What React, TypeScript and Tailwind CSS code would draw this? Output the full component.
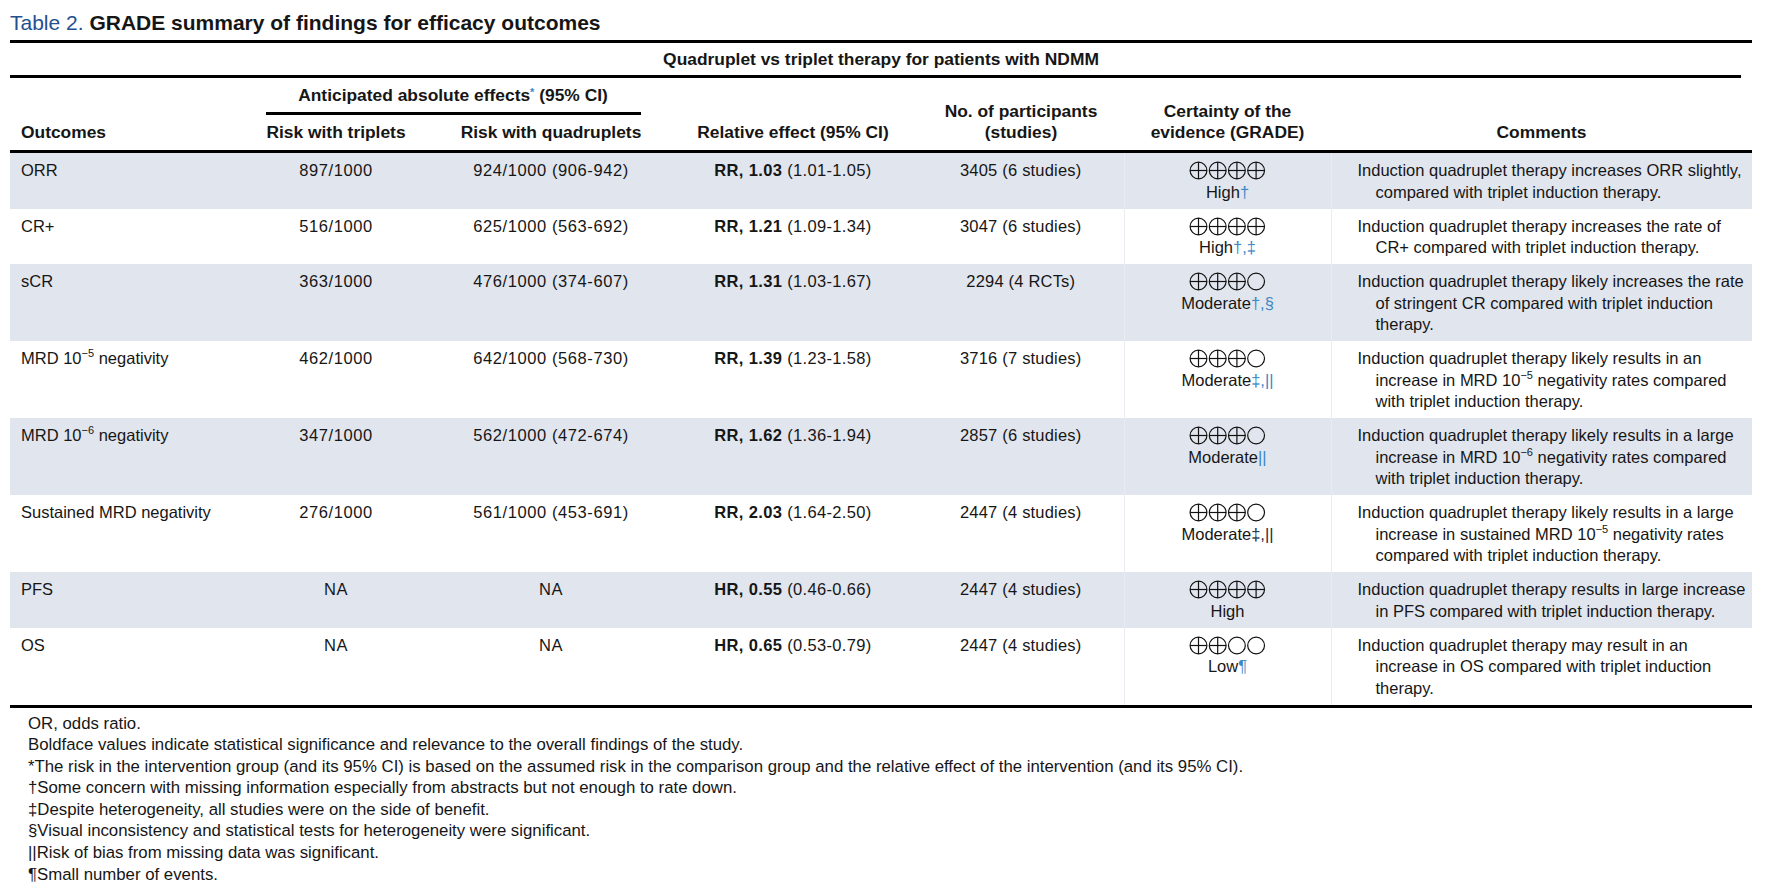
import { ReactNode } from "react";

interface IRow {
  outcome: ReactNode;
  triplets: string;
  quads: string;
  ratio: string;
  ci: string;
  participants: string;
  full: number;
  label: string;
  marks?: ReactNode;
  comment: ReactNode[];
  shaded: boolean;
}

const mark = "text-[#3b88c4]";

// minus-exponent like 10^-5
const Pow = ({ n }: { n: string }) => (
  <>
    10<sup className="text-[11px] -top-[7px]">−{n}</sup>
  </>
);

const rows: IRow[] = [
  {
    outcome: "ORR",
    triplets: "897/1000",
    quads: "924/1000 (906-942)",
    ratio: "RR, 1.03",
    ci: "(1.01-1.05)",
    participants: "3405 (6 studies)",
    full: 4,
    label: "High",
    marks: <span className={mark}>†</span>,
    comment: [
      "Induction quadruplet therapy increases ORR slightly,",
      "compared with triplet induction therapy.",
    ],
    shaded: true,
  },
  {
    outcome: "CR+",
    triplets: "516/1000",
    quads: "625/1000 (563-692)",
    ratio: "RR, 1.21",
    ci: "(1.09-1.34)",
    participants: "3047 (6 studies)",
    full: 4,
    label: "High",
    marks: <span className={mark}>†,‡</span>,
    comment: [
      "Induction quadruplet therapy increases the rate of",
      "CR+ compared with triplet induction therapy.",
    ],
    shaded: false,
  },
  {
    outcome: "sCR",
    triplets: "363/1000",
    quads: "476/1000 (374-607)",
    ratio: "RR, 1.31",
    ci: "(1.03-1.67)",
    participants: "2294 (4 RCTs)",
    full: 3,
    label: "Moderate",
    marks: <span className={mark}>†,§</span>,
    comment: [
      "Induction quadruplet therapy likely increases the rate",
      "of stringent CR compared with triplet induction",
      "therapy.",
    ],
    shaded: true,
  },
  {
    outcome: (
      <>
        MRD <Pow n="5" /> negativity
      </>
    ),
    triplets: "462/1000",
    quads: "642/1000 (568-730)",
    ratio: "RR, 1.39",
    ci: "(1.23-1.58)",
    participants: "3716 (7 studies)",
    full: 3,
    label: "Moderate",
    marks: <span className={mark}>‡,||</span>,
    comment: [
      "Induction quadruplet therapy likely results in an",
      <>
        increase in MRD <Pow n="5" /> negativity rates compared
      </>,
      "with triplet induction therapy.",
    ],
    shaded: false,
  },
  {
    outcome: (
      <>
        MRD <Pow n="6" /> negativity
      </>
    ),
    triplets: "347/1000",
    quads: "562/1000 (472-674)",
    ratio: "RR, 1.62",
    ci: "(1.36-1.94)",
    participants: "2857 (6 studies)",
    full: 3,
    label: "Moderate",
    marks: <span className={mark}>||</span>,
    comment: [
      "Induction quadruplet therapy likely results in a large",
      <>
        increase in MRD <Pow n="6" /> negativity rates compared
      </>,
      "with triplet induction therapy.",
    ],
    shaded: true,
  },
  {
    outcome: "Sustained MRD negativity",
    triplets: "276/1000",
    quads: "561/1000 (453-691)",
    ratio: "RR, 2.03",
    ci: "(1.64-2.50)",
    participants: "2447 (4 studies)",
    full: 3,
    label: "Moderate",
    marks: <span className="text-[#1d2b44]">‡,||</span>,
    comment: [
      "Induction quadruplet therapy likely results in a large",
      <>
        increase in sustained MRD <Pow n="5" /> negativity rates
      </>,
      "compared with triplet induction therapy.",
    ],
    shaded: false,
  },
  {
    outcome: "PFS",
    triplets: "NA",
    quads: "NA",
    ratio: "HR, 0.55",
    ci: "(0.46-0.66)",
    participants: "2447 (4 studies)",
    full: 4,
    label: "High",
    comment: [
      "Induction quadruplet therapy results in large increase",
      "in PFS compared with triplet induction therapy.",
    ],
    shaded: true,
  },
  {
    outcome: "OS",
    triplets: "NA",
    quads: "NA",
    ratio: "HR, 0.65",
    ci: "(0.53-0.79)",
    participants: "2447 (4 studies)",
    full: 2,
    label: "Low",
    marks: <span className={mark}>¶</span>,
    comment: [
      "Induction quadruplet therapy may result in an",
      "increase in OS compared with triplet induction",
      "therapy.",
    ],
    shaded: false,
  },
];

// GRADE certainty circles (filled = crossed circle)
const Certainty = ({ full }: { full: number }) => (
  <svg width="78" height="19" viewBox="0 0 78 19" className="block">
    {[0, 1, 2, 3].map((i) => {
      const cx = 9.5 + 19.2 * i;
      return (
        <g key={i} stroke="#111" strokeWidth="1.2" fill="none">
          <circle cx={cx} cy="9.5" r="8.4" />
          {i < full && (
            <>
              <line x1={cx - 8.4} y1="9.5" x2={cx + 8.4} y2="9.5" />
              <line x1={cx} y1="1.1" x2={cx} y2="17.9" />
            </>
          )}
        </g>
      );
    })}
  </svg>
);

const footnotes: ReactNode[] = [
  "OR, odds ratio.",
  "Boldface values indicate statistical significance and relevance to the overall findings of the study.",
  "*The risk in the intervention group (and its 95% CI) is based on the assumed risk in the comparison group and the relative effect of the intervention (and its 95% CI).",
  "†Some concern with missing information especially from abstracts but not enough to rate down.",
  "‡Despite heterogeneity, all studies were on the side of benefit.",
  "§Visual inconsistency and statistical tests for heterogeneity were significant.",
  "||Risk of bias from missing data was significant.",
  "¶Small number of events.",
];

export default function App() {
  const td = "align-top pt-[7px] pb-[5.5px] text-center";

  return (
    <div className="min-h-screen bg-white pl-[10px] text-[#161616] font-['Liberation_Sans',Arial,sans-serif]">
      <div className="w-[1742px]">
        <div className="pt-[9px] pb-[3px] text-[21px] leading-[28px] font-bold">
          <span className="font-normal text-[#24508f]">Table 2.</span>{" "}
          GRADE summary of findings for efficacy outcomes
        </div>
        <div className="h-[3px] bg-black" />
        <div className="h-[32px] flex items-center justify-center text-[17.4px] font-bold">
          Quadruplet vs triplet therapy for patients with NDMM
        </div>
        <div className="h-[3px] bg-black mr-[11px]" />

        <table className="w-[1742px] table-fixed border-collapse text-[16.5px] leading-[21.5px]">
          <colgroup>
            <col className="w-[228px]" />
            <col className="w-[196px]" />
            <col className="w-[234px]" />
            <col className="w-[250px]" />
            <col className="w-[206px]" />
            <col className="w-[207px]" />
            <col className="w-[421px]" />
          </colgroup>
          <thead className="border-b-[3px] border-black text-[17.4px] font-bold leading-[21px]">
            <tr>
              <th rowSpan={2} className="align-bottom pb-[7px] pl-[11px] text-left font-bold">
                Outcomes
              </th>
              <th colSpan={2} className="align-top pt-[7px] text-center font-bold">
                Anticipated absolute effects
                <sup className={`${mark} text-[11px]`}>*</sup> (95% CI)
                <div className="mt-[6px] h-[3px] bg-black ml-[28px] mr-[27px]" />
              </th>
              <th rowSpan={2} className="align-bottom pb-[7px] text-center font-bold">
                Relative effect (95% CI)
              </th>
              <th rowSpan={2} className="align-bottom pb-[7px] text-center font-bold">
                No. of participants
                <br />
                (studies)
              </th>
              <th rowSpan={2} className="align-bottom pb-[7px] text-center font-bold">
                Certainty of the
                <br />
                evidence (GRADE)
              </th>
              <th rowSpan={2} className="align-bottom pb-[7px] text-center font-bold">
                Comments
              </th>
            </tr>
            <tr>
              <th className="pt-[7px] pb-[7px] text-center font-bold">Risk with triplets</th>
              <th className="pt-[7px] pb-[7px] text-center font-bold">Risk with quadruplets</th>
            </tr>
          </thead>
          <tbody className="border-b-[3px] border-black">
            {rows.map((r, i) => (
              <tr key={i} className={r.shaded ? "bg-[#e1e5ee]" : "bg-white"}>
                <td className="align-top pt-[7px] pb-[5.5px] pl-[11px] text-left">{r.outcome}</td>
                <td className={`${td} tracking-[0.6px]`}>{r.triplets}</td>
                <td className={`${td} tracking-[0.6px]`}>{r.quads}</td>
                <td className={`${td} tracking-[0.35px]`}>
                  <span className="font-bold">{r.ratio}</span> {r.ci}
                </td>
                <td className={`${td} tracking-[0.2px]`}>{r.participants}</td>
                <td className={`${td} border-l border-[#e9ecf3]`}>
                  <div className="h-[21.5px] flex items-center justify-center">
                    <Certainty full={r.full} />
                  </div>
                  <div>
                    {r.label}
                    {r.marks}
                  </div>
                </td>
                <td className="align-top pt-[7px] pb-[5.5px] pl-[44px] pr-[6px] -indent-[18px] text-left whitespace-nowrap border-l border-[#e9ecf3]">
                  {r.comment.map((line, k) => (
                    <span key={k}>
                      {k > 0 && <br />}
                      {line}
                    </span>
                  ))}
                </td>
              </tr>
            ))}
          </tbody>
        </table>

        <div className="mt-[5px] pl-[18px] text-[16.8px] leading-[21.6px]">
          {footnotes.map((f, i) => (
            <div key={i}>{f}</div>
          ))}
        </div>
      </div>
    </div>
  );
}
